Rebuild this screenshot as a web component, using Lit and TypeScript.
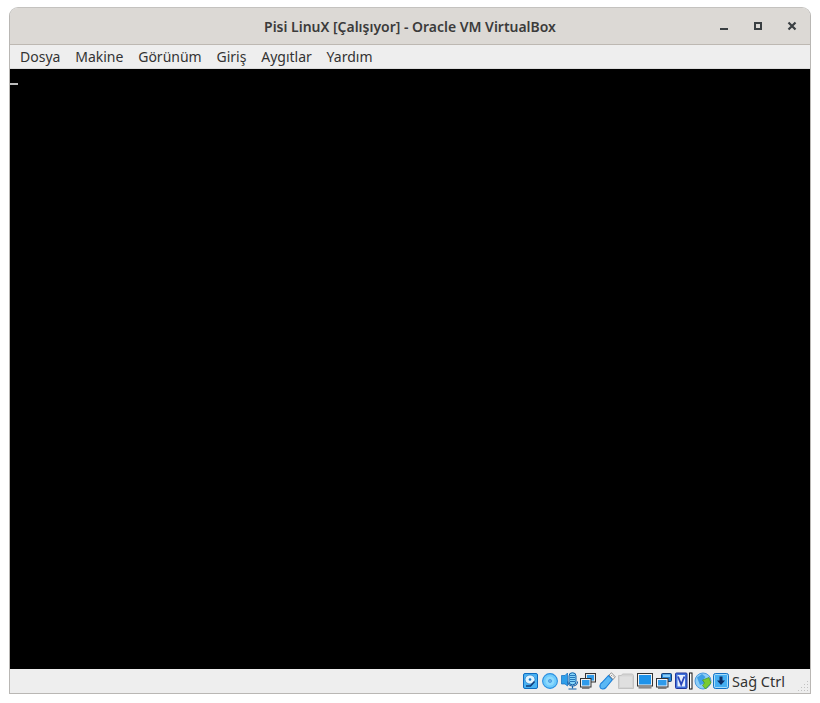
import { LitElement, html, css, svg } from "lit";
import { customElement } from "lit/decorators.js";

const hdd = svg`<svg width="15" height="16" viewBox="0 0 15 16"><rect x=".5" y=".5" width="14" height="15" rx="1.500" fill="#49b2f2" stroke="#0f6cc0"/><ellipse cx="7" cy="6.500" rx="5" ry="4.500" fill="#e2f4fd" stroke="#1b79c9" stroke-width=".7"/><circle cx="7" cy="6.500" r="1.300" fill="#1677c9"/><path d="M3 13h4.500l4-4.500" stroke="#103c78" stroke-width="1.600" fill="none"/></svg>`;
const cd = svg`<svg width="16" height="16" viewBox="0 0 16 16"><circle cx="8" cy="8" r="7.400" fill="#6fcbfb" stroke="#2b8fe0" stroke-width="1.100"/><circle cx="8" cy="8" r="4.500" fill="#8edafd"/><circle cx="8" cy="8" r="1.800" fill="#2a86d8"/><circle cx="8" cy="8" r=".7" fill="#d8f2ff"/></svg>`;
const audio = svg`<svg width="17" height="18" viewBox="0 0 17 18"><path d="M.5 3.500 4 3.500 6.500 1V14L4 12H.5z" fill="#2f9fea" stroke="#0f6cc0" stroke-width=".7"/><rect x="8" y=".8" width="7" height="12" rx="3.200" fill="#86d4f9" stroke="#0f5fa8"/><path d="M9 3.500h5M9 5.500h5M9 7.500h5M9 9.500h5" stroke="#0f5fa8" stroke-width=".8"/><path d="M6.800 9.500c0 6 9.700 6 9.700 0M11.500 14.500v1.800M7.500 17h8" stroke="#0f5fa8" stroke-width="1.200" fill="none"/></svg>`;
const net = svg`<svg width="16" height="16" viewBox="0 0 16 16"><rect x="5.500" y=".5" width="10" height="8.500" fill="#e6e6e6" stroke="#333"/><rect x="7" y="2" width="7" height="5.500" fill="#2f9bea"/><rect x=".5" y="5.500" width="10.500" height="8.500" fill="#f2f2f2" stroke="#333"/><rect x="2" y="7" width="7.500" height="5.500" fill="#2f9bea"/><rect x="2" y="14.300" width="7.500" height="1.500" fill="#666"/></svg>`;
const usb = svg`<svg width="17" height="18" viewBox="0 0 17 18"><path d="M9.500 3.500 13.500 7.500 7 15.500C5 17.500 1.500 17.500 1 15 .6 13 2 11 3 10.500z" fill="#5ab8f5" stroke="#1b7fd8" stroke-width="1.100"/><path d="M10 3 12.500.8 16.300 4.800 14 7.500z" fill="#f6f6f6" stroke="#777" stroke-width=".8"/><path d="M12.300 3.200l.8.8M14 4.300l.5.500" stroke="#555" stroke-width=".8"/></svg>`;
const folder = svg`<svg width="16" height="16" viewBox="0 0 16 16"><path d="M.5 2.500h3l1-1.500h10l1 1.500v13H.5z" fill="#d4d4d4" stroke="#c2c2c2"/><rect x="2" y="3.500" width="12" height="10.500" fill="#dfdfdf"/></svg>`;
const screen = svg`<svg width="16" height="16" viewBox="0 0 16 16"><rect x=".5" y=".5" width="15" height="12.500" fill="#f4f4f4" stroke="#333"/><rect x="2" y="2" width="12" height="9.500" fill="#1e93ea"/><rect x="1.500" y="14" width="13" height="1.600" fill="#8a8a8a"/></svg>`;
const share = svg`<svg width="16" height="16" viewBox="0 0 16 16"><rect x="5.500" y=".5" width="10" height="8" rx="1" fill="#2380d4" stroke="#123f78"/><rect x="7" y="1.500" width="7" height="2.500" fill="#86cbf8"/><rect x=".5" y="5.500" width="11.500" height="8.500" fill="#f0f4ff" stroke="#333"/><rect x="2" y="7" width="8.500" height="5.500" fill="#2f9bea"/><rect x="2" y="14.300" width="8.500" height="1.500" fill="#666"/></svg>`;
const vt = svg`<svg width="18" height="18" viewBox="0 0 18 18"><rect x=".5" y="1" width="11.500" height="15.500" rx="1" fill="#3f72da" stroke="#22359c"/><rect x="2.500" y="3" width="7.500" height="11.500" fill="#e6eefc"/><path d="M3 4.500 6.200 12.500 9.400 4.500" stroke="#2a46b8" stroke-width="1.800" fill="none"/><rect x="14.500" y="1" width="2.500" height="16" fill="#fff" stroke="#111"/></svg>`;
const guest = svg`<svg width="18" height="18" viewBox="0 0 18 18"><circle cx="9" cy="9" r="8" fill="#8ccdf6" stroke="#4a9ae0"/><path d="M3 5.500 8 2l3.500 3-2.500 3 2.500 3-5.500 2z" fill="#3f9fe6"/><path d="M8.500 8l6.500-2.500 2 5.500-5.500 6-3-3.500 2-2.500z" fill="#79cb30" stroke="#3d8a1a" stroke-width=".6"/></svg>`;
const mouse = svg`<svg width="16" height="16" viewBox="0 0 16 16"><rect x=".5" y=".5" width="15" height="15" rx="2" fill="#44aef2" stroke="#1270c4"/><rect x="1.500" y="1.500" width="13" height="13" rx="1" fill="none" stroke="#bfe6fb" stroke-width=".8"/><path d="M6.500 3.500h3v4H12L8 12 4 7.500h2.500z" fill="#0d2f66"/></svg>`;

@customElement("app-root")
export class AppRoot extends LitElement {
  static styles = css`
    :host { display: block; width: 820px; height: 703px; background: #fff; font-family: "Noto Sans", sans-serif; overflow: hidden; }
    .win { margin: 7px 0 0 9px; width: 802px; height: 687px; box-sizing: border-box; display: flex; flex-direction: column;
      border: 1px solid #b9b7b4; border-top-color: #c4c2bf; border-radius: 9px 9px 0 0; overflow: hidden; background: #eee; }
    .title { height: 36px; flex: none; background: #dcd9d5; border-bottom: 1px solid #bdb8b2; display: grid; grid-template-columns: 1fr auto 1fr; align-items: center; }
    .name { grid-column: 2; font-size: 13.96px; font-weight: 600; color: #3b3b3b; white-space: nowrap; }
    .btns { grid-column: 3; justify-self: end; display: flex; gap: 18px; padding-right: 10px; align-items: center; }
    .btns svg { display: block; }
    .menu { height: 23px; flex: none; display: flex; gap: 14.8px; align-items: center; padding: 0 10px; font-size: 14px; color: #333; background: #eee; border-bottom: 1px solid #dcdcdc; }
    .screen { flex: 1; background: #000; position: relative; }
    .cursor { position: absolute; left: 0; top: 14px; width: 8px; height: 1.5px; background: #bdbdbd; }
    .status { height: 24px; flex: none; background: #eee; display: flex; align-items: center; justify-content: flex-end; padding-right: 25px; font-size: 14.5px; color: #333; position: relative; }
    .slot { width: 19px; flex: none; display: flex; align-items: center; }
    .slot svg { display: block; flex: none; }
    .grip { position: absolute; right: 2px; bottom: 2px; width: 11px; height: 11px; clip-path: polygon(100% 0, 100% 100%, 0 100%);
      background-image: radial-gradient(#c2c2c2 .7px, transparent .8px); background-size: 3px 3px; }
  `;

  render() {
    const items = ["Dosya", "Makine", "Görünüm", "Giriş", "Aygıtlar", "Yardım"];
    const icons = [hdd, cd, audio, net, usb, folder, screen, share, vt, guest, mouse];
    return html`<div class="win">
      <div class="title">
        <span class="name">Pisi LinuX [Çalışıyor] - Oracle VM VirtualBox</span>
        <div class="btns">
          <svg width="16" height="16" viewBox="0 0 16 16"><rect x="4" y="10" width="8" height="2" fill="#3a3f42"/></svg>
          <svg width="16" height="16" viewBox="0 0 16 16"><rect x="5" y="5" width="6" height="6" fill="none" stroke="#3a3f42" stroke-width="2"/></svg>
          <svg width="16" height="16" viewBox="0 0 16 16"><path d="M4.500 4.500l7 7m0-7l-7 7" stroke="#3a3f42" stroke-width="2.200" fill="none"/></svg>
        </div>
      </div>
      <div class="menu">${items.map((m) => html`<span>${m}</span>`)}</div>
      <div class="screen"><div class="cursor"></div></div>
      <div class="status">
        ${icons.map((i) => html`<div class="slot">${i}</div>`)}
        <span>Sağ Ctrl</span>
        <div class="grip"></div>
      </div>
    </div>`;
  }
}
